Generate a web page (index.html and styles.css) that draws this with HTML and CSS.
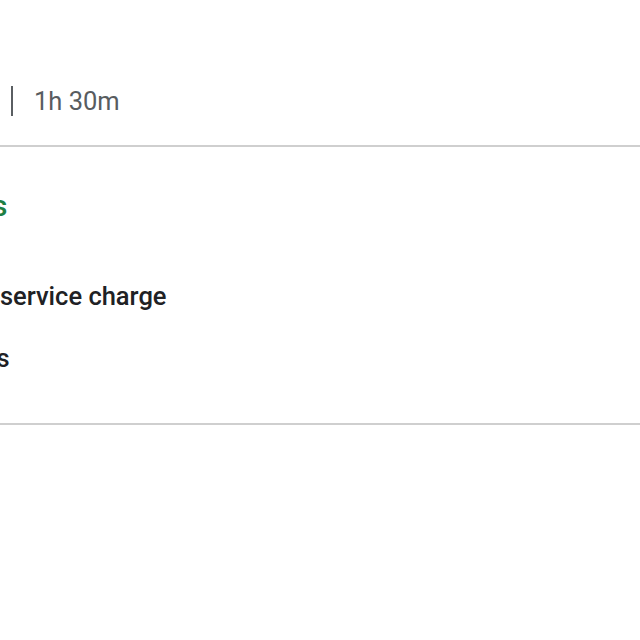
FILE: index.html
```html
<!DOCTYPE html>
<html lang="en">
<head>
<meta charset="utf-8">
<title>Trip details</title>
<link rel="stylesheet" href="styles.css">
</head>
<body>
<div class="page">
  <section class="trip">
    <div class="trip-row">
      <span class="trip-stops">Nonstop</span>
      <span class="trip-sep"></span>
      <span class="trip-duration">1h 30m</span>
    </div>
  </section>
  <section class="perks">
    <h2 class="perks-title">Amenities</h2>
    <ul class="perks-list">
      <li class="perk perk-service">No service charge</li>
      <li class="perk perk-drinks">Free drinks</li>
    </ul>
  </section>
</div>
</body>
</html>
```
FILE: styles.css
```css
html, body {
  margin: 0;
  padding: 0;
  background: #ffffff;
  overflow: hidden;
}
body {
  font-family: Roboto, "Noto Sans", "Liberation Sans", sans-serif;
  width: 640px;
  height: 640px;
}
.page {
  width: 640px;
  overflow: hidden;
}
.trip {
  padding: 86px 0 29px;
  border-bottom: 2px solid #cfcfcf;
}
.trip-row {
  display: flex;
  align-items: center;
  margin-left: -107px;
  height: 30px;
  white-space: nowrap;
}
.trip-stops,
.trip-duration {
  font-size: 25.5px;
  line-height: 30px;
  color: #585c60;
}
.trip-stops {
  margin-right: 21px;
}
.trip-sep {
  width: 2px;
  height: 30px;
  background: #5a5e62;
  flex: none;
  margin-right: 21px;
}
.perks {
  padding: 41px 0 49px;
  border-bottom: 2px solid #cfcfcf;
}
.perks-title {
  margin: 0 0 0 -128px;
  font-size: 30px;
  line-height: 36px;
  font-weight: 500;
  color: #1f7f45;
  white-space: nowrap;
}
.perks-list {
  list-style: none;
  margin: 56px 0 0;
  padding: 0;
  display: flex;
  flex-direction: column;
  gap: 30px;
}
.perk {
  font-size: 25.5px;
  line-height: 32px;
  font-weight: 500;
  color: #202124;
  white-space: nowrap;
}
.perk-service {
  margin-left: -39px;
}
.perk-drinks {
  margin-left: -117px;
}
```
